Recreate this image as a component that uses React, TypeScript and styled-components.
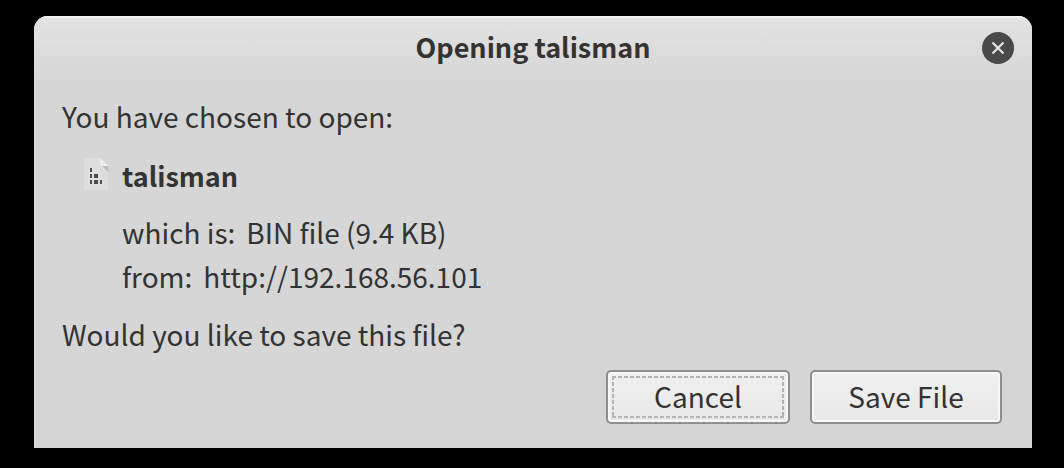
import React from "react";
import styled, { createGlobalStyle, css } from "styled-components";

const GlobalStyle = createGlobalStyle`
  * { box-sizing: border-box; }
  body {
    margin: 0;
    background: #000;
    color: #333;
    font-family: "Noto Sans CJK SC", "Open Sans", sans-serif;
    font-size: 28px;
    line-height: 36px;
  }
`;

const Dialog = styled.section`
  margin: 16px 32px 20px 34px;
  border-radius: 14px 14px 0 0;
  background: #d6d6d6;
  overflow: hidden;
`;

const TitleBar = styled.header`
  display: grid;
  grid-template-columns: 32px 1fr 32px;
  align-items: center;
  height: 64px;
  padding: 0 18px;
  background: linear-gradient(#e3e3e3, #d6d6d6);
  box-shadow: inset 0 2px #f3f3f3;
`;

const Title = styled.h1`
  grid-column: 2;
  margin: 0;
  padding-bottom: 2px;
  font-size: 27px;
  font-weight: 700;
  line-height: 36px;
  text-align: center;
`;

const CloseButton = styled.button`
  display: block;
  width: 32px;
  height: 32px;
  padding: 0;
  border: 0;
  border-radius: 50%;
  background: #4a4a4a;
  svg { display: block; }
`;

const Body = styled.div`
  padding: 18px 30px 24px 28px;
`;

const Prompt = styled.p`
  margin: 0;
`;

const FileInfo = styled.div`
  display: grid;
  grid-template-columns: 24px 1fr;
  column-gap: 14px;
  margin: 24px 0 22px 22px;
`;

const FileName = styled.strong`
  font-size: 27px;
  font-weight: 700;
`;

const Details = styled.dl`
  grid-column: 2;
  display: grid;
  row-gap: 8px;
  margin: 20px 0 0;
`;

const Detail = styled.div`
  display: flex;
  gap: 11px;
  dd { margin: 0; }
`;

const Actions = styled.footer`
  display: flex;
  justify-content: flex-end;
  gap: 20px;
  margin-top: 18px;
`;

const focusRing = css`
  --dash: #b4b4b4 0 4px, transparent 4px 6px;
  background:
    repeating-linear-gradient(90deg, var(--dash)) top / 100% 2px no-repeat,
    repeating-linear-gradient(90deg, var(--dash)) bottom / 100% 2px no-repeat,
    repeating-linear-gradient(var(--dash)) left / 2px 100% no-repeat,
    repeating-linear-gradient(var(--dash)) right / 2px 100% no-repeat;
`;

const ActionButton = styled.button<{ $focused?: boolean }>`
  min-width: ${(p) => (p.$focused ? 184 : 192)}px;
  height: 54px;
  padding: 4px;
  border: 2px solid #8e8e8e;
  border-radius: 5px;
  background: linear-gradient(#f0f0f0, #e8e8e8);
  box-shadow: inset 0 0 0 2px #f8f8f8;
  color: inherit;
  font: inherit;
  span {
    display: block;
    height: 42px;
    padding: 0 30px;
    line-height: 40px;
    ${(p) => p.$focused && focusRing}
  }
`;

function CloseIcon() {
  return (
    <svg width="32" height="32" viewBox="0 0 32 32" aria-hidden="true">
      <path d="M10.5 10.5 21.5 21.5M21.5 10.5 10.5 21.5" stroke="#e4e4e4" strokeWidth="2.2" />
    </svg>
  );
}

function BinaryFileIcon() {
  return (
    <svg width="24" height="32" viewBox="0 0 24 32" aria-hidden="true">
      <path d="M0 0H16L24 8V32H0Z" fill="#dedede" />
      <path d="M18 8H24V14Z" fill="#bcbcbc" />
      <path d="M16 0L24 8H18Q16 8 16 6Z" fill="#efefef" />
      <path d="M6 10h2v4H6zM6 16h2v4H6zM10 16h4v4h-4zM6 22h2v4H6zM10 22h4v4h-4zM16 22h2v4h-2z" fill="#4c4c4c" />
    </svg>
  );
}

export default function App() {
  return (
    <>
      <GlobalStyle />
      <Dialog role="dialog" aria-labelledby="dialog-title">
        <TitleBar>
          <Title id="dialog-title">Opening talisman</Title>
          <CloseButton type="button" aria-label="Close">
            <CloseIcon />
          </CloseButton>
        </TitleBar>
        <Body>
          <Prompt>You have chosen to open:</Prompt>
          <FileInfo>
            <BinaryFileIcon />
            <FileName>talisman</FileName>
            <Details>
              <Detail>
                <dt>which is:</dt>
                <dd>BIN file (9.4 KB)</dd>
              </Detail>
              <Detail>
                <dt>from:</dt>
                <dd>http://192.168.56.101</dd>
              </Detail>
            </Details>
          </FileInfo>
          <Prompt>Would you like to save this file?</Prompt>
          <Actions>
            <ActionButton type="button" $focused>
              <span>Cancel</span>
            </ActionButton>
            <ActionButton type="button">
              <span>Save File</span>
            </ActionButton>
          </Actions>
        </Body>
      </Dialog>
    </>
  );
}
